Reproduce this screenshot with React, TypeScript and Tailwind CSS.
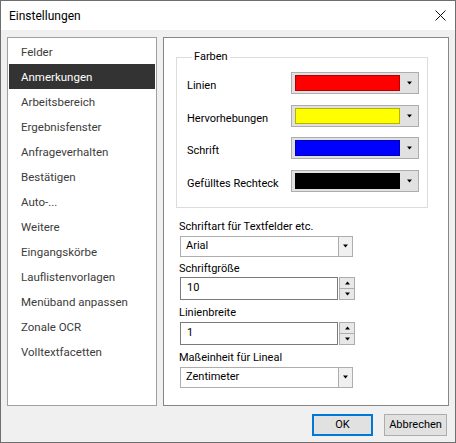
import { useState } from 'react'

const SECTIONS = [
  'Felder',
  'Anmerkungen',
  'Arbeitsbereich',
  'Ergebnisfenster',
  'Anfrageverhalten',
  'Bestätigen',
  'Auto-...',
  'Weitere',
  'Eingangskörbe',
  'Lauflistenvorlagen',
  'Menüband anpassen',
  'Zonale OCR',
  'Volltextfacetten',
]

const COLORS = [
  { label: 'Linien', fill: 'bg-[#ff0000]', edge: 'border-[#b40000]' },
  { label: 'Hervorhebungen', fill: 'bg-[#ffff00]', edge: 'border-[#b4b400]' },
  { label: 'Schrift', fill: 'bg-[#0000ff]', edge: 'border-[#0000b4]' },
  { label: 'Gefülltes Rechteck', fill: 'bg-[#000000]', edge: 'border-[#000000]' },
]

function Arrow({ up = false }: { up?: boolean }) {
  return (
    <svg width="7" height="4" viewBox="0 0 7 4" className={up ? 'rotate-180' : ''}>
      <path d="M1 0.5h5L3.5 3.5z" fill="#000" />
    </svg>
  )
}

function Combo({ value }: { value: string }) {
  return (
    <div className="flex h-[21px] w-[173px] border border-[#adadad] bg-white">
      <div className="flex flex-1 items-center pl-[5px]">{value}</div>
      <div className="flex w-[14px] items-center justify-center border-l border-[#adadad] bg-[#f0f0f0]">
        <Arrow />
      </div>
    </div>
  )
}

function Spinner({ value }: { value: string }) {
  return (
    <div className="flex h-[23px] w-[175px] gap-[1px]">
      <div className="flex w-[158px] items-center border border-[#7a7a7a] bg-white pl-[6px]">{value}</div>
      <div className="flex w-[16px] flex-col">
        <button className="flex flex-1 items-center justify-center border border-[#adadad] bg-[#e8e8e8]">
          <Arrow up />
        </button>
        <button className="flex flex-1 items-center justify-center border border-t-0 border-[#adadad] bg-[#e8e8e8]">
          <Arrow />
        </button>
      </div>
    </div>
  )
}

export default function App() {
  const [active, setActive] = useState(1)

  return (
    <div className="flex h-[443px] w-[456px] flex-col border border-[#6e6e6e] bg-[#f0f0f0] font-['Roboto',sans-serif] text-[11px] leading-[16px] text-black">
      {/* Title bar */}
      <div className="flex h-[29px] items-center justify-between bg-white pl-[8px] pr-[9px]">
        <span className="text-[12px]">Einstellungen</span>
        <svg width="11" height="11" viewBox="0 0 11 11">
          <path d="M0.5 0.5l10 10M10.5 0.5l-10 10" stroke="#111" strokeWidth="1" />
        </svg>
      </div>

      <div className="flex flex-1 flex-col px-[6px] pt-[7px]">
        <div className="flex h-[369px] gap-[6px]">
          {/* Section list */}
          <div className="w-[150px] border border-[#a0a0a0] bg-white p-[1px]">
            {SECTIONS.map((s, i) => (
              <div
                key={s}
                onClick={() => setActive(i)}
                className={`flex h-[25px] items-center pl-[12px] text-[11.5px] ${
                  i === active ? 'bg-[#333333] text-white' : 'text-[#3c3c3c]'
                }`}
              >
                {s}
              </div>
            ))}
          </div>

          {/* Settings page */}
          <div className="flex-1 border border-[#868686] bg-white pl-[12px] pt-[11px]">
            <fieldset className="w-[252px] border border-[#dcdcdc] pb-[15px] pl-[10px] pr-[8px]">
              <legend className="ml-[5px] px-[2px]">Farben</legend>
              <div className="mt-[7px] flex flex-col gap-[10.5px]">
                {COLORS.map(c => (
                  <div key={c.label} className="flex items-end justify-between">
                    <span>{c.label}</span>
                    <div className="flex h-[22px] w-[128px] items-center border border-[#adadad] bg-[#e1e1e1] pl-[3px]">
                      <div className={`h-[16px] w-[105px] border ${c.fill} ${c.edge}`} />
                      <div className="flex flex-1 items-center justify-center">
                        <Arrow />
                      </div>
                    </div>
                  </div>
                ))}
              </div>
            </fieldset>

            <div className="mt-[11px] flex flex-col pl-[3px]">
              <label>Schriftart für Textfelder etc.</label>
              <div className="mt-[1px] pl-[1px]">
                <Combo value="Arial" />
              </div>
              <label className="mt-[4px]">Schriftgröße</label>
              <div className="pl-[1px]">
                <Spinner value="10" />
              </div>
              <label className="mt-[5px]">Linienbreite</label>
              <div className="mt-[1px] pl-[1px]">
                <Spinner value="1" />
              </div>
              <label className="mt-[5px]">Maßeinheit für Lineal</label>
              <div className="mt-[1px] pl-[1px]">
                <Combo value="Zentimeter" />
              </div>
            </div>
          </div>
        </div>

        <div className="mt-[8px] flex justify-end gap-[11px] pr-[2px]">
          <button className="h-[22px] w-[61px] border-2 border-[#0078d7] bg-[#e1e1e1]">OK</button>
          <button className="h-[22px] w-[63px] border border-[#adadad] bg-[#e1e1e1]">Abbrechen</button>
        </div>
      </div>
    </div>
  )
}
